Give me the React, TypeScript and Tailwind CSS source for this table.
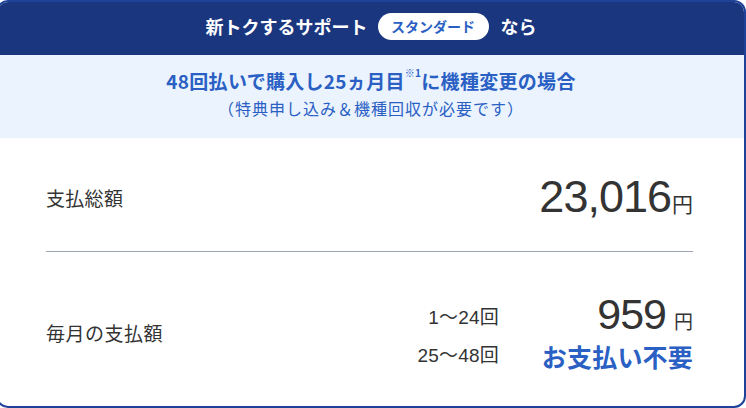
const jp = 'font-["Noto_Sans_CJK_JP",sans-serif]';
const num = 'font-["Liberation_Sans","Noto_Sans_CJK_JP",sans-serif]';

export default function App() {
  return (
    <div className="w-[746px] h-[408px] overflow-hidden bg-white">
      <div className="-ml-[4px] w-[750px] h-[408px] border-2 border-[#1f4299] rounded-[12px] overflow-hidden flex flex-col">
        {/* header */}
        <div className={`h-[53px] pb-[4px] bg-[#1a367f] flex items-center justify-center text-white ${jp}`}>
          <span className="text-[18px] font-bold">新トクするサポート</span>
          <span className="ml-[10px] h-[27px] w-[111px] rounded-full bg-white text-[#2a5fc4] text-[14px] font-bold flex items-center justify-center">
            スタンダード
          </span>
          <span className="ml-[12px] text-[18px] font-bold">なら</span>
        </div>

        {/* condition */}
        <div className={`h-[83px] bg-[#eaf3fe] flex flex-col items-center pt-[12px] text-[#2a5fc4] ${jp}`}>
          <p className="text-[19px] font-bold leading-[28px] tracking-[0.3px]">
            48回払いで購入し25ヵ月目<sup className="text-[10px] align-[7px]">※1</sup>に機種変更の場合
          </p>
          <p className="text-[16px] leading-[26px] tracking-[1px]">（特典申し込み＆機種回収が必要です）</p>
        </div>

        {/* total */}
        <div className="h-[113px] pt-[8px] pl-[48px] pr-[51px] flex items-center justify-between text-[#333]">
          <span className={`text-[19px] tracking-[0.3px] ${jp}`}>支払総額</span>
          <span className="flex items-baseline -mt-[4px]">
            <span className={`text-[45px] tracking-[-1px] ${num}`}>23,016</span>
            <span className={`text-[21px] ml-[1px] ${jp}`}>円</span>
          </span>
        </div>

        <div className="pl-[48px] pr-[51px]">
          <div className="h-px bg-[#9ea4b8]" />
        </div>

        {/* monthly */}
        <div className="flex-1 pt-[8px] pl-[48px] pr-[51px] flex items-center justify-between text-[#333]">
          <span className={`text-[19px] tracking-[0.5px] ${jp}`}>毎月の支払額</span>
          <div className="grid grid-cols-[auto_194px] items-center gap-y-[2px]">
            <span className={`text-[19px] text-right pt-[8px] tracking-[0.2px] ${num}`}>1〜24回</span>
            <span className="flex items-baseline justify-end h-[44px]">
              <span className={`text-[43px] leading-[44px] tracking-[-1px] ${num}`}>959</span>
              <span className={`text-[19px] ml-[8px] ${jp}`}>円</span>
            </span>
            <span className={`text-[19px] text-right tracking-[0.2px] ${num}`}>25〜48回</span>
            <span className={`text-right text-[25px] font-bold text-[#2a5fc4] leading-[36px] tracking-[0.2px] ${jp}`}>お支払い不要</span>
          </div>
        </div>
      </div>
    </div>
  );
}
